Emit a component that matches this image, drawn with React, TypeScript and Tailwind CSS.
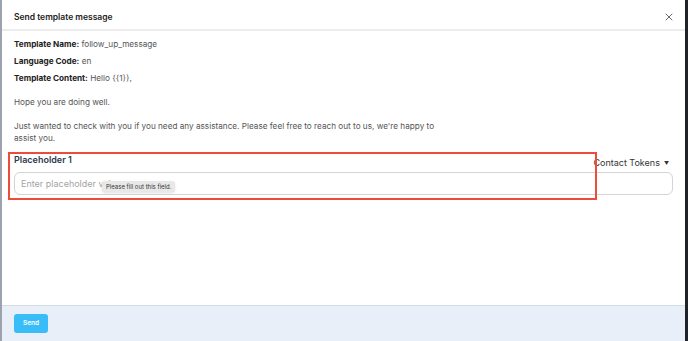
import { X } from 'lucide-react';

const font = { fontFamily: 'Inter, "Noto Sans", sans-serif' };

export default function App() {
  return (
    <div className="flex h-[341px] w-[688px] bg-[#1f2329]" style={font}>
      <div className="w-[2px] bg-[#9ca3af]" />
      <div className="relative flex w-[683px] flex-col bg-white">
        <header className="flex h-[31px] items-center justify-between border-b-2 border-[#ececec] pl-[12px] pr-[10px] pt-[5px]">
          <h2 className="text-[8.5px] font-semibold text-[#222]">Send template message</h2>
          <X size={12} strokeWidth={1.6} className="text-[#444]" />
        </header>

        <div className="flex-1 pl-[12px] pr-[12px] pt-[7px] text-[8.2px] leading-[12px] text-[#555]">
          <p className="mb-[5px]">
            <span className="font-bold text-[#222]">Template Name:</span> follow_up_message
          </p>
          <p className="mb-[5px]">
            <span className="font-bold text-[#222]">Language Code:</span> en
          </p>
          <p className="max-w-[432px] whitespace-pre-line">
            <span className="font-bold text-[#222]">Template Content:</span>{' '}
            {`Hello {{1}},

Hope you are doing well.

Just wanted to check with you if you need any assistance. Please feel free to reach out to us, we're happy to assist you.`}
          </p>

          <div className="mt-[10px]">
            <div className="flex items-end justify-between">
              <label className="text-[9px] font-semibold text-[#2d3a4d]">Placeholder 1</label>
              <button className="mb-[-3px] flex items-center gap-[4px] pr-[4px] text-[9px] text-[#333]">
                Contact Tokens
                <span className="text-[5px]">▼</span>
              </button>
            </div>
            <div className="mt-[6px] flex h-[23px] w-[659px] items-center rounded-[6px] border border-[#d4d4d4] px-[6px] text-[9px] text-[#a3a3a3]">
              Enter placeholder value
            </div>
          </div>
        </div>

        <footer className="flex h-[36px] items-center border-t border-[#d5dce6] bg-[#e9eff8] pl-[12px]">
          <button className="h-[19px] w-[34px] rounded-[3px] bg-[#38bdf8] text-[6.5px] font-semibold text-white">
            Send
          </button>
        </footer>

        <div className="pointer-events-none absolute left-[6px] top-[152px] h-[48px] w-[589px] border-2 border-[#f04a3a]" />
        <div className="absolute left-[100px] top-[181px] rounded-[3px] bg-[#e8e8e8] px-[4px] py-[1px] text-[6px] text-[#333] shadow">
          Please fill out this field.
        </div>
      </div>
      <div className="flex-1" />
    </div>
  );
}
